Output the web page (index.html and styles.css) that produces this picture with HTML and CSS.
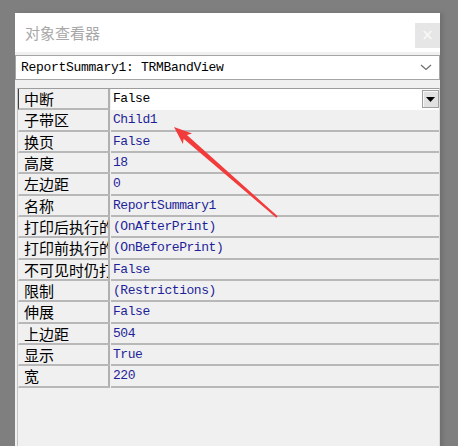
FILE: index.html
```html
<!DOCTYPE html>
<html>
<head>
<meta charset="utf-8">
<link rel="stylesheet" href="styles.css">
</head>
<body>
<div class="dialog">
  <div class="titlebar">
    <span class="title">对象查看器</span>
    <span class="close">×</span>
  </div>
  <div class="combo">
    <span class="combo-text">ReportSummary1: TRMBandView</span>
    <svg class="chev" width="12" height="7" viewBox="0 0 12 7"><path d="M1 1 L6 5.5 L11 1" fill="none" stroke="#707070" stroke-width="1.3"/></svg>
  </div>
  <div class="grid">
    <div class="row sel"><div class="name">中断</div><div class="val black">False<span class="ddbtn"><svg width="9" height="5" viewBox="0 0 9 5"><path d="M0 0 L9 0 L4.5 5 Z" fill="#000"/></svg></span></div></div>
    <div class="row"><div class="name">子带区</div><div class="val">Child1</div></div>
    <div class="row"><div class="name">换页</div><div class="val">False</div></div>
    <div class="row"><div class="name">高度</div><div class="val">18</div></div>
    <div class="row"><div class="name">左边距</div><div class="val">0</div></div>
    <div class="row"><div class="name">名称</div><div class="val">ReportSummary1</div></div>
    <div class="row"><div class="name">打印后执行的</div><div class="val">(OnAfterPrint)</div></div>
    <div class="row"><div class="name">打印前执行的</div><div class="val">(OnBeforePrint)</div></div>
    <div class="row"><div class="name">不可见时仍打</div><div class="val">False</div></div>
    <div class="row"><div class="name">限制</div><div class="val">(Restrictions)</div></div>
    <div class="row"><div class="name">伸展</div><div class="val">False</div></div>
    <div class="row"><div class="name">上边距</div><div class="val">504</div></div>
    <div class="row"><div class="name">显示</div><div class="val">True</div></div>
    <div class="row"><div class="name">宽</div><div class="val">220</div></div>
  </div>
</div>
<svg class="arrow" width="458" height="446" viewBox="0 0 458 446">
  <polygon points="174,127 192.1,133.5 186.9,135 277.7,216.2 276.3,217.8 183.6,138.8 182.9,144.1" fill="#f23b3b"/>
</svg>
</body>
</html>
```
FILE: styles.css
```css
html, body {
  margin: 0;
  padding: 0;
  background: #7f7f7f;
  overflow: hidden;
}
body {
  width: 458px;
  height: 446px;
  position: relative;
}
.dialog {
  margin-left: 15px;
  margin-top: 13px;
  width: 425px;
  height: 440px;
  background: #f0f0f0;
  box-shadow: 3px 0 4px rgba(0,0,0,0.12);
}
.titlebar {
  height: 39px;
  background: #ffffff;
  display: flex;
  justify-content: space-between;
  align-items: flex-start;
}
.title {
  margin-left: 10px;
  margin-top: 10px;
  font-family: "Noto Sans CJK SC", sans-serif;
  font-size: 15px;
  line-height: 20px;
  color: #a8a8a8;
}
.close {
  margin-top: 10px;
  width: 25px;
  height: 25px;
  background: #e6e6e6;
  color: #fafafa;
  font-family: "DejaVu Sans", sans-serif;
  font-size: 15px;
  line-height: 25px;
  text-align: center;
}
.combo {
  margin-top: 3px;
  height: 25px;
  box-sizing: border-box;
  border: 1px solid #a5a5a5;
  background: #ffffff;
  display: flex;
  align-items: center;
  justify-content: space-between;
  padding-left: 5px;
  padding-right: 7px;
}
.combo-text {
  font-family: "Liberation Mono", monospace;
  font-size: 13px;
  letter-spacing: -0.3px;
  color: #000;
}
.chev { display: block; }
.grid {
  margin-top: 8px;
  margin-left: 2px;
  width: 421px;
  border-top: 1px solid #9c9c9c;
  border-left: 1px solid #c4c4c4;
  border-right: 1px solid #dcdcdc;
  height: 360px;
}
.row {
  display: flex;
  height: 21.333px;
}
.name {
  width: 92px;
  flex: none;
  box-sizing: border-box;
  height: 100%;
  border-left: 1px solid transparent;
  border-right: 2px solid #b0b0b0;
  border-bottom: 2px solid #b8b8b8;
  padding-left: 5px;
  font-family: "Noto Sans CJK SC", sans-serif;
  font-size: 15px;
  line-height: 19px;
  color: #000;
  white-space: nowrap;
  overflow: hidden;
}
.sel .name {
  border-left: 1px solid #404040;
}
.val {
  flex: 1;
  margin-left: 1px;
  box-sizing: border-box;
  height: 100%;
  border-bottom: 2px solid #b8b8b8;
  padding-left: 2px;
  font-family: "Liberation Mono", monospace;
  font-size: 13px;
  letter-spacing: -0.45px;
  line-height: 19px;
  color: #1f1f98;
  white-space: nowrap;
  position: relative;
}
.sel .val {
  background: #ffffff;
  border-bottom-color: #ffffff;
}
.val.black { color: #000; }
.ddbtn {
  position: absolute;
  right: 0;
  top: 1px;
  width: 17px;
  height: 18px;
  box-sizing: border-box;
  background: #e1e1e1;
  border: 1px solid #a0a0a0;
  box-shadow: inset 1px 1px 0 #f8f8f8;
  display: flex;
  align-items: center;
  justify-content: center;
}
.ddbtn svg { display: block; }
.arrow {
  position: absolute;
  left: 0;
  top: 0;
  pointer-events: none;
}
```
